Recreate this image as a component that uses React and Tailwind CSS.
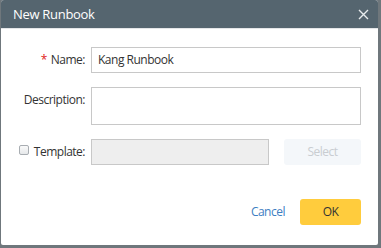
import React from "react";

export default function App() {
  const font = { fontFamily: '"Open Sans", "Noto Sans", sans-serif' };
  return (
    <div className="w-[381px] h-[248px] bg-[#6f777c] pl-px" style={font}>
      <div className="w-[377px] h-[245px] bg-white rounded-t-[3px] rounded-b-[2px] flex flex-col overflow-hidden">
        <div className="h-[28px] bg-[#55656f] flex items-center justify-between pl-[12px] pr-[9px] shrink-0">
          <span className="text-white text-[13px] leading-none tracking-[-0.3px]">New Runbook</span>
          <svg width="11" height="11" viewBox="0 0 11 11" className="mt-px">
            <path d="M1 1 L10 10 M10 1 L1 10" stroke="#e8ecee" strokeWidth="1.4" />
          </svg>
        </div>
        <div className="h-px bg-[#e4e6e8] shrink-0" />
        <div className="flex flex-col pt-[18px] pl-[18px] pr-[17px] text-[12px] tracking-[-0.5px] text-[#333]">
          <div className="flex items-start gap-[6px]">
            <div className="w-[66px] h-[26px] flex items-center justify-end">
              <span className="text-[#e02020] mr-[4px]">*</span>
              <span>Name:</span>
            </div>
            <div className="w-[270px] h-[26px] border border-[#c8c8c8] flex items-center px-[6px]">
              Kang Runbook
            </div>
          </div>
          <div className="flex items-start gap-[6px] mt-[14px]">
            <div className="w-[66px] h-[26px] flex items-center justify-end">
              <span>Description:</span>
            </div>
            <div className="w-[270px] h-[38px] border border-[#c8c8c8]" />
          </div>
          <div className="flex items-start gap-[6px] mt-[14px]">
            <div className="w-[66px] h-[26px] flex items-center justify-between">
              <span className="w-[10px] h-[10px] rounded-[2px] border border-[#a8adb2] bg-gradient-to-b from-[#fafafa] to-[#e6e8ea] mb-[5px]" />
              <span>Template:</span>
            </div>
            <div className="w-[178px] h-[26px] border border-[#c8c8c8] bg-[#eeeeee]" />
            <div className="w-[77px] h-[26px] ml-[9px] rounded-[3px] bg-[#f4f7fa] text-[#c9cdd1] flex items-center justify-center">
              Select
            </div>
          </div>
          <div className="flex items-center justify-end mt-[34px]">
            <span className="text-[#3d80c2] mr-[15px]">Cancel</span>
            <div className="w-[61px] h-[26px] rounded-[3px] bg-[#ffcc3d] flex items-center justify-center text-[#333]">
              OK
            </div>
          </div>
        </div>
      </div>
    </div>
  );
}
